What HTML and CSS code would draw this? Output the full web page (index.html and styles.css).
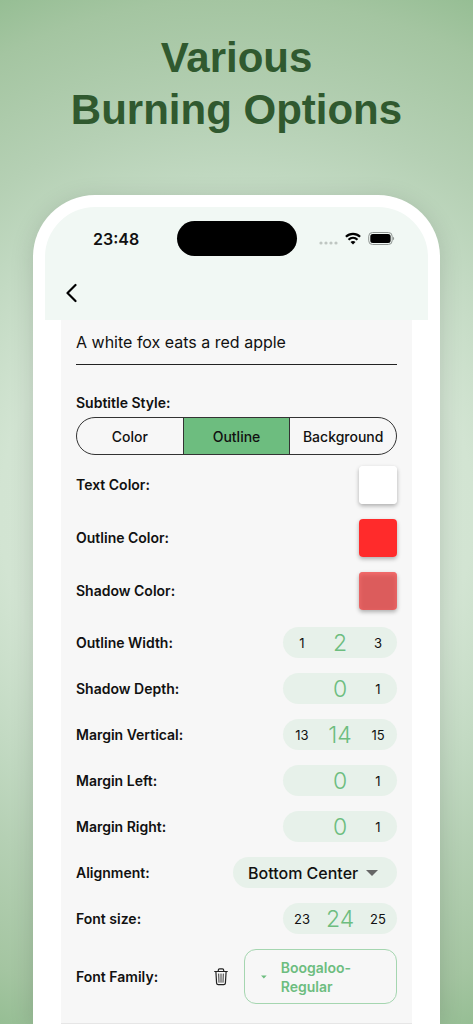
FILE: index.html
```html
<!DOCTYPE html>
<html lang="en">
<head>
  <meta charset="UTF-8" />
  <meta name="viewport" content="width=device-width, initial-scale=1.0" />
  <title>Various Burning Options</title>
  <link rel="stylesheet" href="styles.css">
</head>
<body>

  <h1 class="headline">Various<br>Burning Options</h1>

  <main class="phone">
    <div class="screen">

      <header class="top">
        <div class="status-bar">
          <span class="time">23:48</span>
          <span class="island"></span>
          <span class="status-icons">
            <svg class="signal" width="19" height="16" viewBox="0 0 19 16" fill="#bfc6c2">
              <circle cx="2" cy="12" r="1.6" /><circle cx="7" cy="12" r="1.6" />
              <circle cx="12" cy="12" r="1.6" /><circle cx="17" cy="12" r="1.6" />
            </svg>
            <svg class="wifi" width="16" height="16" viewBox="0 0 16 16" fill="none" stroke="#000" stroke-width="2.2">
              <path d="M.9 5.800C5 1.900 11 1.900 15.100 5.800" />
              <path d="M3.500 8.700c2.600-2.400 6.400-2.400 9 0" />
              <path d="M5.500 10.900c1.500-1.300 3.500-1.300 5 0L8 13.500z" fill="#000" stroke="none" />
            </svg>
            <svg class="battery" width="27" height="16" viewBox="0 0 27 16">
              <rect x="0.7" y="1.500" width="23.500" height="12" rx="3.800" fill="none" stroke="#8f9592" />
              <rect x="2.300" y="3" width="20.300" height="9" rx="2.500" />
              <path d="M25 5.800c1.500.6 1.500 2.900 0 3.500z" fill="#8f9592" />
            </svg>
          </span>
        </div>
        <button class="back" aria-label="Back">
          <svg width="12" height="20" viewBox="0 0 12 20" fill="none" stroke="#000" stroke-width="2.200" stroke-linecap="round" stroke-linejoin="round">
            <path d="M10.500 2 2.500 10l8 8" />
          </svg>
        </button>
      </header>

      <form class="panel">
        <input class="preview" type="text" aria-label="Subtitle text" value="A white fox eats a red apple">

        <fieldset class="style-group">
          <legend class="label">Subtitle Style:</legend>
          <div class="segments">
            <label class="segment"><input type="radio" name="style"><span>Color</span></label>
            <label class="segment"><input type="radio" name="style" checked><span>Outline</span></label>
            <label class="segment"><input type="radio" name="style"><span>Background</span></label>
          </div>
        </fieldset>

        <div class="colors">
          <div class="row">
            <label class="label" for="textColor">Text Color:</label>
            <input class="swatch" id="textColor" type="color" value="#ffffff">
          </div>
          <div class="row">
            <label class="label" for="outlineColor">Outline Color:</label>
            <input class="swatch" id="outlineColor" type="color" value="#ff2b2b">
          </div>
          <div class="row">
            <label class="label" for="shadowColor">Shadow Color:</label>
            <input class="swatch translucent" id="shadowColor" type="color" value="#dc5c5c">
          </div>
        </div>

        <div class="options">
          <div class="row">
            <label class="label" for="outlineWidth">Outline Width:</label>
            <div class="picker">
              <button type="button">1</button>
              <input id="outlineWidth" type="text" inputmode="numeric" value="2">
              <button type="button">3</button>
            </div>
          </div>
          <div class="row">
            <label class="label" for="shadowDepth">Shadow Depth:</label>
            <div class="picker">
              <span></span>
              <input id="shadowDepth" type="text" inputmode="numeric" value="0">
              <button type="button">1</button>
            </div>
          </div>
          <div class="row">
            <label class="label" for="marginVertical">Margin Vertical:</label>
            <div class="picker">
              <button type="button">13</button>
              <input id="marginVertical" type="text" inputmode="numeric" value="14">
              <button type="button">15</button>
            </div>
          </div>
          <div class="row">
            <label class="label" for="marginLeft">Margin Left:</label>
            <div class="picker">
              <span></span>
              <input id="marginLeft" type="text" inputmode="numeric" value="0">
              <button type="button">1</button>
            </div>
          </div>
          <div class="row">
            <label class="label" for="marginRight">Margin Right:</label>
            <div class="picker">
              <span></span>
              <input id="marginRight" type="text" inputmode="numeric" value="0">
              <button type="button">1</button>
            </div>
          </div>
          <div class="row">
            <label class="label" for="alignment">Alignment:</label>
            <div class="dropdown">
              <select id="alignment">
                <option>Bottom Center</option>
              </select>
              <svg width="12" height="6" viewBox="0 0 12 6" fill="#666"><path d="M0 0h12L6 6z" /></svg>
            </div>
          </div>
          <div class="row">
            <label class="label" for="fontSize">Font size:</label>
            <div class="picker">
              <button type="button">23</button>
              <input id="fontSize" type="text" inputmode="numeric" value="24">
              <button type="button">25</button>
            </div>
          </div>
          <div class="row">
            <label class="label" for="fontFamily">Font Family:</label>
            <div class="font-controls">
              <button type="button" class="trash" aria-label="Delete font">
                <svg width="14" height="18" viewBox="0 0 14 18" fill="none" stroke="#222" stroke-width="1.200" stroke-linecap="round" stroke-linejoin="round">
                  <path d="M.7 3.500h12.600M4.300 3.300V2.200c0-.8.500-1.300 1.300-1.300h2.800c.8 0 1.300.5 1.300 1.300v1.100" />
                  <path d="M1.900 3.700l.7 11.400c.1 1 .7 1.600 1.600 1.600h5.600c.9 0 1.500-.6 1.600-1.600l.7-11.400" />
                  <path d="M4.700 6l.3 8.300M7 6v8.300M9.300 6 9 14.300" stroke-width="0.900" />
                </svg>
              </button>
              <button type="button" class="font-button" id="fontFamily" aria-haspopup="listbox">
                <svg width="7" height="4" viewBox="0 0 7 4" fill="#6dbd7f"><path d="M0 0h7L3.500 3.700z" /></svg>
                <span>Boogaloo-Regular</span>
              </button>
            </div>
          </div>
        </div>
      </form>

    </div>
  </main>

</body>
</html>
```

FILE: styles.css
```css
* {
  box-sizing: border-box;
}

body {
  margin: 0;
  min-height: 100vh;
  padding: 32px 33px 0;
  background: radial-gradient(circle at center, #dbe8db 0%, #d2e4d2 42%, #c0d8c0 60%, #b5d0b4 71%, #a4c5a1 91%, #96be94 100%);
  font-family: Inter, "Liberation Sans", sans-serif;
  color: #111;
}

input,
button,
select {
  font: inherit;
  color: inherit;
  margin: 0;
  padding: 0;
  border: none;
  background: none;
}

button,
select {
  cursor: pointer;
}

svg {
  display: block;
}

.headline {
  margin: 0 0 59px;
  font-family: "Liberation Sans", Arial, sans-serif;
  font-size: 42px;
  line-height: 52px;
  text-align: center;
  color: #30592f;
}

.phone {
  padding: 12px 12px 0;
  border-radius: 62px 62px 0 0;
  background: #fff;
  box-shadow: 0 4px 24px rgba(0, 0, 0, 0.14);
}

/* status bar and back button */

.top {
  padding: 14px 20px 17px;
  border-radius: 50px 50px 0 0;
  background: #f1f8f4;
}

.status-bar {
  display: grid;
  grid-template-columns: 1fr 120px 1fr;
  align-items: center;
}

.time {
  padding-left: 28px;
  font-size: 16px;
  font-weight: 600;
}

.island {
  height: 35px;
  border-radius: 18px;
  background: #000;
}

.status-icons {
  display: flex;
  justify-content: flex-end;
  gap: 7px;
  padding-right: 13px;
}

.back {
  display: flex;
  margin-top: 27px;
}

/* options form */

.panel {
  margin: 0 16px;
  padding: 0 15px 19px;
  border-bottom: 1px solid #e6e6e6;
  background: #f7f7f7;
}

.preview {
  width: 100%;
  height: 45px;
  border-bottom: 1px solid #222;
  border-radius: 0;
  font-size: 16px;
}

.label {
  padding: 0;
  font-size: 14px;
  line-height: 18px;
  font-weight: 600;
}

.style-group {
  margin: 29px 0 0;
  padding: 0;
  border: none;
}

.segments {
  display: flex;
  height: 38px;
  margin-top: 5px;
  border: 1px solid #333;
  border-radius: 19px;
  overflow: hidden;
}

.segment {
  flex: 1;
  display: flex;
  align-items: center;
  justify-content: center;
  font-size: 14px;
  font-weight: 500;
  cursor: pointer;
}

.segment + .segment {
  border-left: 1px solid #333;
}

.segment input {
  appearance: none;
}

.segment:has(input:checked) {
  background: #6dbd7f;
}

.row {
  display: flex;
  align-items: center;
  justify-content: space-between;
}

.colors {
  display: grid;
  gap: 15px;
  margin-top: 11px;
}

.swatch {
  width: 38px;
  height: 38px;
  border-radius: 4px;
  box-shadow: 0 2px 4px rgba(0, 0, 0, 0.3);
  appearance: none;
  overflow: hidden;
}

.swatch::-webkit-color-swatch-wrapper {
  padding: 0;
}

.swatch::-webkit-color-swatch {
  border: none;
}

.swatch.translucent::-webkit-color-swatch {
  box-shadow: inset 0 2px 5px #f86f6f;
}

.options {
  display: grid;
  gap: 15px;
  margin-top: 17px;
}

.picker {
  display: grid;
  grid-template-columns: repeat(3, 1fr);
  width: 114px;
  height: 31px;
  border-radius: 16px;
  background: #e7f1ea;
  font-size: 13px;
}

.picker input {
  width: 100%;
  text-align: center;
  font-size: 23px;
  font-weight: 300;
  color: #6dbd7f;
}

.dropdown {
  display: grid;
  align-items: center;
  border-radius: 16px;
  background: #e7f1ea;
}

.dropdown select,
.dropdown svg {
  grid-area: 1 / 1;
}

.dropdown select {
  width: 164px;
  height: 31px;
  padding: 0 15px;
  font-size: 16px;
  font-weight: 500;
  appearance: none;
}

.dropdown svg {
  justify-self: end;
  margin-right: 19px;
  pointer-events: none;
}

.font-controls {
  display: flex;
  align-items: center;
  gap: 16px;
}

.font-button {
  display: flex;
  align-items: center;
  gap: 14px;
  width: 153px;
  height: 55px;
  padding: 0 16px;
  border: 1px solid #a5d6b0;
  border-radius: 12px;
  font-size: 14px;
  line-height: 19px;
  font-weight: 600;
  text-align: left;
  color: #6dbd7f;
}
```
